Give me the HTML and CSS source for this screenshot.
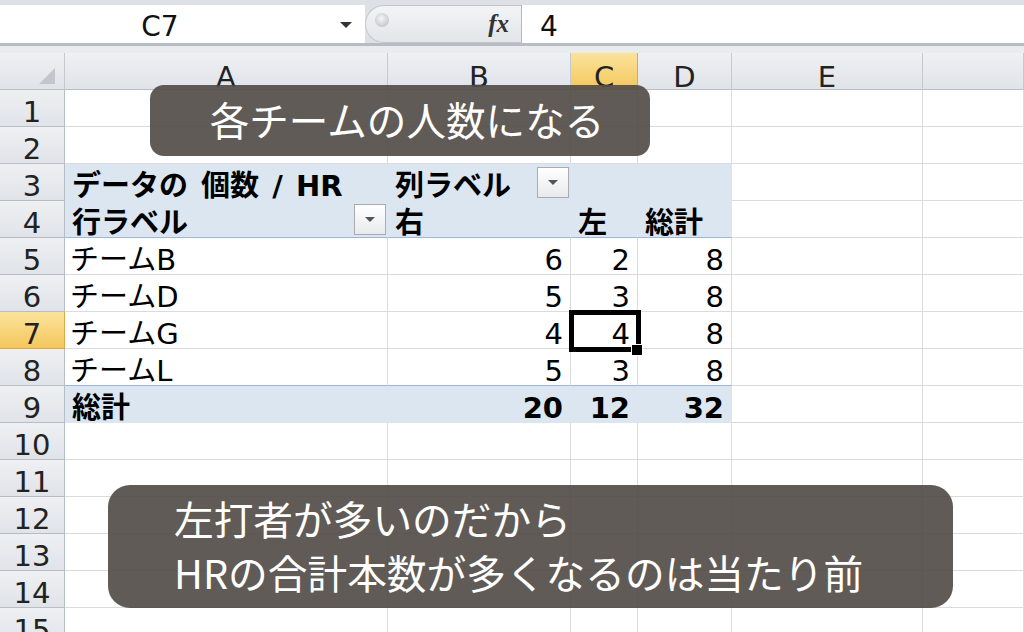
FILE: index.html
```html
<!DOCTYPE html>
<html lang="ja">
<head>
<meta charset="utf-8">
<title>ピボットテーブル</title>
<link rel="stylesheet" href="styles.css">
</head>
<body>
<div class="app">
  <div class="fbar">
    <div class="namebox"><span class="name">C7</span><span class="nb-arrow"></span></div>
    <div class="fxzone"><span class="knob"></span><span class="fx">fx</span></div>
    <div class="finput">4</div>
  </div>
  <div class="fgap"></div>
  <div class="sheet">
    <div class="row">
      <div class="c ch corner"><span class="tri"></span></div>
      <div class="c ch">A</div>
      <div class="c ch">B</div>
      <div class="c ch sel">C</div>
      <div class="c ch">D</div>
      <div class="c ch">E</div>
      <div class="c ch"></div>
    </div>
    <div class="row">
      <div class="c rh">1</div><div class="c"></div><div class="c"></div><div class="c"></div><div class="c"></div><div class="c"></div><div class="c"></div>
    </div>
    <div class="row">
      <div class="c rh">2</div><div class="c"></div><div class="c"></div><div class="c"></div><div class="c"></div><div class="c"></div><div class="c"></div>
    </div>
    <div class="row">
      <div class="c rh">3</div>
      <div class="c pv b wide">データの 個数 / HR</div>
      <div class="c pv b split"><span>列ラベル</span><span class="dd"></span></div>
      <div class="c pv"></div>
      <div class="c pv"></div>
      <div class="c"></div><div class="c"></div>
    </div>
    <div class="row">
      <div class="c rh">4</div>
      <div class="c pv pl b split"><span>行ラベル</span><span class="dd"></span></div>
      <div class="c pv pl b">右</div>
      <div class="c pv pl b">左</div>
      <div class="c pv pl b">総計</div>
      <div class="c"></div><div class="c"></div>
    </div>
    <div class="row">
      <div class="c rh">5</div>
      <div class="c lbl">チームB</div>
      <div class="c num">6</div>
      <div class="c num">2</div>
      <div class="c num">8</div>
      <div class="c"></div><div class="c"></div>
    </div>
    <div class="row">
      <div class="c rh">6</div>
      <div class="c lbl">チームD</div>
      <div class="c num">5</div>
      <div class="c num">3</div>
      <div class="c num">8</div>
      <div class="c"></div><div class="c"></div>
    </div>
    <div class="row">
      <div class="c rh sel">7</div>
      <div class="c lbl">チームG</div>
      <div class="c num">4</div>
      <div class="c num active">4<span class="selbox"></span><span class="handle"></span></div>
      <div class="c num">8</div>
      <div class="c"></div><div class="c"></div>
    </div>
    <div class="row">
      <div class="c rh">8</div>
      <div class="c lbl pl">チームL</div>
      <div class="c num pl">5</div>
      <div class="c num pl">3</div>
      <div class="c num pl">8</div>
      <div class="c"></div><div class="c"></div>
    </div>
    <div class="row">
      <div class="c rh">9</div>
      <div class="c pv b">総計</div>
      <div class="c pv b num">20</div>
      <div class="c pv b num">12</div>
      <div class="c pv b num">32</div>
      <div class="c"></div><div class="c"></div>
    </div>
    <div class="row">
      <div class="c rh">10</div><div class="c"></div><div class="c"></div><div class="c"></div><div class="c"></div><div class="c"></div><div class="c"></div>
    </div>
    <div class="row">
      <div class="c rh">11</div><div class="c"></div><div class="c"></div><div class="c"></div><div class="c"></div><div class="c"></div><div class="c"></div>
    </div>
    <div class="row">
      <div class="c rh">12</div><div class="c"></div><div class="c"></div><div class="c"></div><div class="c"></div><div class="c"></div><div class="c"></div>
    </div>
    <div class="row">
      <div class="c rh">13</div><div class="c"></div><div class="c"></div><div class="c"></div><div class="c"></div><div class="c"></div><div class="c"></div>
    </div>
    <div class="row">
      <div class="c rh">14</div><div class="c"></div><div class="c"></div><div class="c"></div><div class="c"></div><div class="c"></div><div class="c"></div>
    </div>
    <div class="row">
      <div class="c rh">15</div><div class="c"></div><div class="c"></div><div class="c"></div><div class="c"></div><div class="c"></div><div class="c"></div>
    </div>
  </div>
  <div class="caption cap1">各チームの人数になる</div>
  <div class="caption cap2"><span>左打者が多いのだから</span><span>HRの合計本数が多くなるのは当たり前</span></div>
</div>
</body>
</html>
```

FILE: styles.css
```css
* { box-sizing: border-box; }
html, body { margin: 0; padding: 0; }
body {
  background: #fff;
  font-family: "DejaVu Sans", "Noto Sans CJK JP", sans-serif;
}
.app {
  position: relative;
  width: 1024px;
  height: 632px;
  overflow: hidden;
  background: #fff;
}

/* formula bar */
.fbar {
  display: flex;
  height: 46px;
  padding-top: 5px;
  background: #dde1e6;
  border-bottom: 3px solid #b9bdc3;
}
.namebox {
  width: 365px;
  height: 38px;
  background: #fff;
  display: flex;
  align-items: center;
  padding-top: 5px;
  font-size: 28px;
  line-height: 30px;
  color: #111;
}
.name { width: 320px; text-align: center; }
.nb-arrow {
  margin-left: 20px;
  margin-top: -4px;
  width: 0;
  height: 0;
  border-left: 6px solid transparent;
  border-right: 6px solid transparent;
  border-top: 6px solid #333;
}
.fxzone {
  width: 156px;
  height: 38px;
  background: linear-gradient(#f3f4f6, #e2e5e9);
  border: 1px solid #c3c7cd;
  border-right: none;
  border-radius: 19px 0 0 19px;
  display: flex;
  align-items: center;
  justify-content: space-between;
  padding: 0 12px 0 9px;
}
.knob {
  width: 14px;
  height: 14px;
  border-radius: 50%;
  background: radial-gradient(circle at 45% 40%, #f6f6f6, #b3b6bb);
  margin-top: -8px;
}
.fx {
  font-family: "Liberation Serif", serif;
  font-style: italic;
  font-weight: bold;
  font-size: 25px;
  color: #333;
}
.finput {
  flex: 1;
  height: 38px;
  background: #fff;
  border-left: 1px solid #b5bac1;
  padding-left: 18px;
  padding-top: 5px;
  font-size: 28px;
  line-height: 30px;
  display: flex;
  align-items: center;
  color: #111;
}
.fgap { height: 7px; background: #e9ecef; }

/* sheet */
.row {
  display: grid;
  grid-template-columns: 65px 323px 183px 67px 94px 191px 101px;
  height: 37px;
}
.c {
  border-right: 1px solid #d9dbde;
  border-bottom: 1px solid #d9dbde;
  display: flex;
  align-items: flex-end;
  padding: 0 7px;
  font-size: 29px;
  line-height: 27px;
  white-space: nowrap;
  color: #000;
}
.ch, .rh {
  background: linear-gradient(#eef0f3, #e0e3e8);
  border-right-color: #b7bdc5;
  border-bottom-color: #b7bdc5;
  justify-content: center;
  padding: 0;
  color: #222;
}
.ch { border-right-color: #c4c9d0; line-height: 24px; }
.corner {
  justify-content: flex-end;
  align-items: flex-end;
  padding: 0 9px 5px 0;
}
.tri {
  width: 0;
  height: 0;
  border-left: 16px solid transparent;
  border-bottom: 16px solid #c3c7cd;
}
.sel {
  background: linear-gradient(#fbe39c, #f4c75c);
  border-right-color: #e2a845;
  border-bottom-color: #e2a845;
}
.b { font-weight: bold; }
.wide { word-spacing: 3px; }
.lbl { padding-left: 5px; }
.num { justify-content: flex-end; padding-right: 7px; }
.pv {
  background: #dce6f1;
  border-right-color: #dce6f1;
  border-bottom-color: #dce6f1;
}
.pl { border-bottom-color: #9db7d8; }
.split { justify-content: space-between; padding-right: 1px; }
.dd {
  align-self: center;
  width: 32px;
  height: 31px;
  border: 1px solid #a9abae;
  background: linear-gradient(#ffffff, #e9eaec);
  display: flex;
  align-items: center;
  justify-content: center;
}
.dd::after {
  content: "";
  width: 0;
  height: 0;
  border-left: 5px solid transparent;
  border-right: 5px solid transparent;
  border-top: 5px solid #555;
}

/* active cell */
.active { position: relative; }
.selbox {
  position: absolute;
  left: -2px;
  top: -2px;
  right: -4px;
  bottom: -4px;
  border: 5px solid #000;
}
.handle {
  position: absolute;
  left: 60px;
  top: 32px;
  width: 12px;
  height: 12px;
  background: #000;
  border: 1px solid #fff;
}

/* captions */
.caption {
  position: absolute;
  background: rgba(82, 77, 73, 0.92);
  color: #fff;
  font-family: "Noto Sans CJK JP", sans-serif;
  font-weight: 400;
}
.cap1 {
  left: 150px;
  top: 85px;
  width: 500px;
  height: 71px;
  border-radius: 14px;
  font-size: 39.6px;
  line-height: 40px;
  display: flex;
  align-items: center;
  justify-content: center;
  padding: 0 0 4px 14px;
}
.cap2 {
  left: 108px;
  top: 485px;
  width: 845px;
  height: 123px;
  border-radius: 22px;
  font-size: 39.7px;
  line-height: 54px;
  display: flex;
  flex-direction: column;
  justify-content: center;
  padding: 0 0 4px 66px;
}
```
